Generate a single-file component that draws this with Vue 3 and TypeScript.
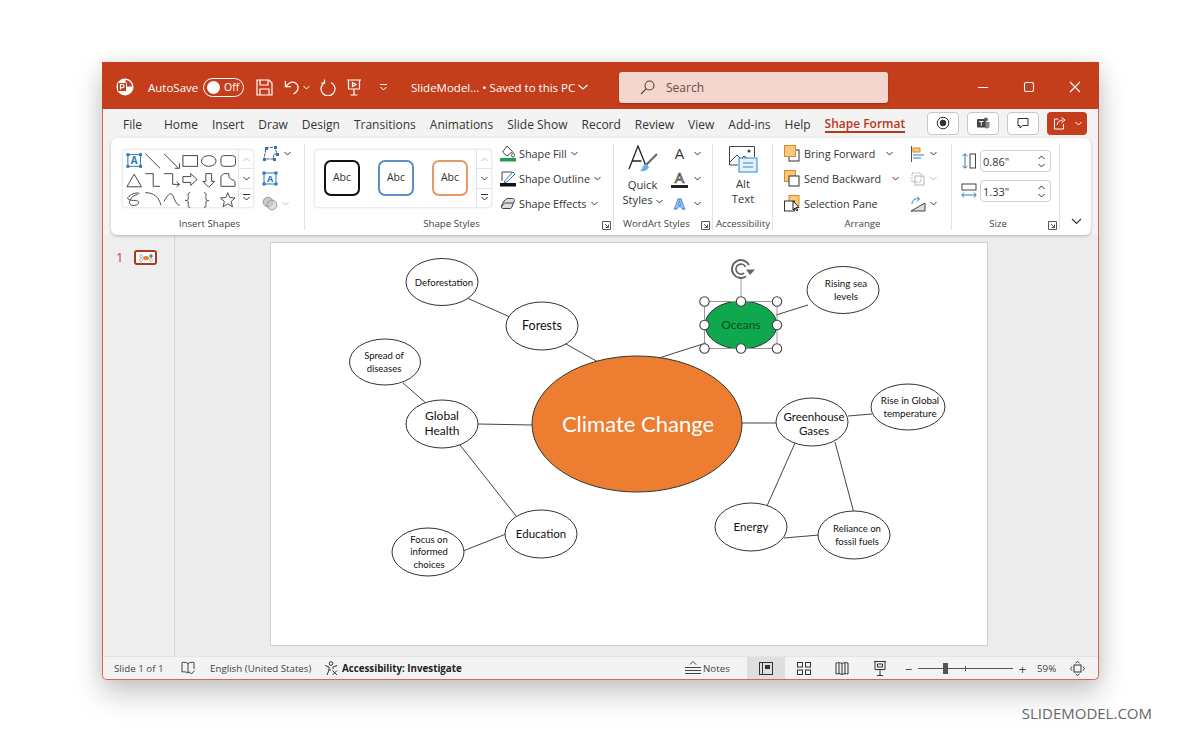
<template>
  <div class="page">
    <div class="window">
      <!-- Title bar -->
      <header class="titlebar">
        <svg class="logo" width="20" height="20" viewBox="0 0 20 20">
          <circle cx="10" cy="10" r="8.5" fill="#fff" />
          <path d="M10.500 9.500V3a6.500 6.500 0 0 1 6.500 6.500Z" fill="#c43e1c" />
          <rect x="2.500" y="5.500" width="9" height="9" rx="1" fill="#c43e1c" stroke="#fff" />
          <path d="M5.500 12.500V7.500H7.500a1.500 1.500 0 0 1 0 3.200H5.500" fill="none" stroke="#fff" stroke-width="1.200" />
        </svg>
        <span class="autosave">AutoSave</span>
        <div class="toggle"><span class="knob"></span><span>Off</span></div>
        <svg class="qat save" width="17" height="17" viewBox="0 0 17 17" fill="none" stroke="#fff" stroke-width="1.200">
          <path d="M1 1h12l3 3v12H1Z" /><path d="M4 1v5h8V1M4 16v-6h9v6" />
        </svg>
        <svg class="qat undo" width="15" height="17" viewBox="0 0 16 17" fill="none" stroke="#fff" stroke-width="1.300">
          <path d="M1.500 1.500v6h6" /><path d="M1.500 7.500 6 3.600c4-2.400 9 .6 9 4.800 0 3-1.600 5.200-5 7.100" />
        </svg>
        <svg class="chev-white" width="7" height="5" viewBox="0 0 7 5" fill="none" stroke="#fff"><path d="m.5 1 3 3 3-3" /></svg>
        <svg class="qat redo" width="16" height="17" viewBox="0 0 16 17" fill="none" stroke="#fff" stroke-width="1.200">
          <path d="M5 3.500a7 7 0 1 0 6 0" /><path d="M4.500.5v3.500H1" />
        </svg>
        <svg class="qat present" width="16" height="17" viewBox="0 0 16 17" fill="none" stroke="#fff" stroke-width="1.200">
          <path d="M1 1h14M2.500 1v9h11V1M8 10v6M4.500 16h7" /><path d="m6.500 3.500 3.500 2-3.500 2Z" />
        </svg>
        <svg class="qat more" width="9" height="7" viewBox="0 0 9 7" fill="none" stroke="#fff"><path d="M1 .5h7M1.500 3l3 3 3-3" /></svg>
        <span class="doc-title">SlideModel... • Saved to this PC</span>
        <svg class="doc-chev" width="10" height="6" viewBox="0 0 10 6" fill="none" stroke="#fff" stroke-width="1.100"><path d="m.5 1 4.500 4 4.500-4" /></svg>
        <div class="search">
          <svg width="15" height="15" viewBox="0 0 15 15" fill="none" stroke="#5f3a30" stroke-width="1.100">
            <circle cx="9.500" cy="5.500" r="4.500" /><path d="M6.300 8.700 1 14" />
          </svg>
          <span>Search</span>
        </div>
        <div class="win-controls">
          <svg width="12" height="12" viewBox="0 0 12 12" stroke="#fff" fill="none"><path d="M1 6.500h10" /></svg>
          <svg width="12" height="12" viewBox="0 0 12 12" stroke="#fff" stroke-width="1.100" fill="none"><rect x="1.500" y="1.500" width="9" height="9" rx="1.500" /></svg>
          <svg width="12" height="12" viewBox="0 0 12 12" stroke="#fff" stroke-width="1.100" fill="none"><path d="m1 1 10 10M11 1 1 11" /></svg>
        </div>
      </header>

      <!-- Tabs -->
      <nav class="tabs">
        <span
          v-for="tab in tabs"
          :key="tab"
          :class="['tab', { 'tab--active': tab === 'Shape Format', 'tab--file': tab === 'File' }]"
        >{{ tab }}</span>
        <div class="tab-actions">
          <button class="tab-btn">
            <svg width="14" height="14" viewBox="0 0 14 14"><circle cx="7" cy="7" r="5.800" fill="none" stroke="#333" /><circle cx="7" cy="7" r="3.200" fill="#333" /></svg>
          </button>
          <button class="tab-btn">
            <svg width="14" height="14" viewBox="0 0 14 14"><circle cx="10" cy="3.500" r="2" fill="#666" /><path d="M8 6h5.500v4a2.500 2.500 0 0 1-5 0Z" fill="#888" /><rect x="1" y="3" width="8.500" height="8.500" rx="1" fill="#444" /><path d="M3 5.500h4.500M5.250 5.500v4.200" stroke="#fff" /></svg>
          </button>
          <button class="tab-btn">
            <svg width="14" height="14" viewBox="0 0 14 14" fill="none" stroke="#333"><path d="M2 2.500h10v7H6.500L4 12V9.500H2Z" /></svg>
          </button>
          <button class="share-btn">
            <svg width="14" height="14" viewBox="0 0 14 14" fill="none" stroke="#fff"><path d="M5.500 3H1.500v10h9V8" /><path d="M4 9c.5-3 2.500-5 6-5M8.500 1.500 12 4 8.500 7" /></svg>
            <svg width="7" height="5" viewBox="0 0 7 5" fill="none" stroke="#fff"><path d="m.5 1 3 3 3-3" /></svg>
          </button>
        </div>
      </nav>

      <!-- Ribbon -->
      <section class="ribbon">
        <div class="group group--shapes">
          <div class="group-body">
            <div class="gallery gallery--shapes">
              <svg width="118" height="59" viewBox="0 0 118 59" fill="none" stroke="#444" stroke-width="1">
                <rect x="5" y="4" width="13" height="12" stroke="#2b78b8" />
                <g fill="#2b78b8" stroke="none">
                  <rect x="3.500" y="2.500" width="3" height="3" /><rect x="16.500" y="2.500" width="3" height="3" />
                  <rect x="3.500" y="14.500" width="3" height="3" /><rect x="16.500" y="14.500" width="3" height="3" />
                  <text x="11.500" y="14" font-size="10" font-weight="700" text-anchor="middle" font-family="Open Sans, sans-serif">A</text>
                </g>
                <path d="m23 3 15 15M42 3l15 15M58 18h-5M58 18v-5" />
                <rect x="61.500" y="5" width="15" height="11" />
                <ellipse cx="88" cy="10.500" rx="7.500" ry="5.500" />
                <rect x="100.500" y="5" width="15" height="11" rx="3" />
                <path d="M11.500 24 4 37h15Z" />
                <path d="M23 23.500h8v13h7M42 23.500h9v11h7M58 34.500l-3-2.500M58 34.500l-3 2.500" />
                <path d="M61.500 26.500h8v-3l6.500 6-6.500 6v-3h-8Z" />
                <path d="M85 23.500h6v8h3l-6 6-6-6h3Z" />
                <path d="M100.500 36.500v-9c0-2 2-4 4-4h4c0 4 1 5 3 6 2 .5 3.500 1 3.500 4v3Z" />
                <path d="M17 44c-3-2-10 1-12 4-1 3 5 3 9 3 4 1 2 5-2 5-5 1-6-3-5-5 1-3 5-6 8-6" />
                <path d="M23 43c9 0 14 5 16 13" />
                <path d="M42 52c3-5 5-8 7-8 3 0 4 11 9 12" />
                <path d="M69 43c-3 0-2 2-2 5s-1 3-3 3c2 0 3 0 3 3s-1 4 2 4" />
                <path d="M83 43c3 0 2 2 2 5s1 3 3 3c-2 0-3 0-3 3s1 4-2 4" />
                <path d="m107.500 43 2 5 5.500.5-4 3.500 1.300 5.500-4.800-3-4.800 3 1.300-5.500-4-3.500 5.500-.5Z" />
              </svg>
              <div class="scroll-col">
                <span class="scroll-btn scroll-btn--off">
                  <svg width="7" height="5" viewBox="0 0 7 5" fill="none" stroke="#bbb"><path d="m.5 4 3-3 3 3" /></svg>
                </span>
                <span class="scroll-btn">
                  <svg width="7" height="5" viewBox="0 0 7 5" fill="none" stroke="#333"><path d="m.5 1 3 3 3-3" /></svg>
                </span>
                <span class="scroll-btn scroll-btn--more">
                  <svg width="9" height="7" viewBox="0 0 9 7" fill="none" stroke="#333"><path d="M1 .5h7M1.500 3l3 3 3-3" /></svg>
                </span>
              </div>
            </div>
            <div class="shape-tools">
              <div class="tool-row">
                <svg width="18" height="15" viewBox="0 0 18 15" fill="none" stroke="#555" stroke-dasharray="3 1"><path d="m4 2 9-1 2 7-3 0-1 5H2Z" /><g fill="#2b78b8" stroke="none"><rect x="3" y="1" width="3" height="3" /><rect x="12" y="0" width="3" height="3" /><rect x="14" y="7" width="3" height="3" /><rect x="1" y="12" width="3" height="3" /><rect x="11" y="12" width="3" height="3" /></g></svg>
                <svg class="chev" width="7" height="5" viewBox="0 0 7 5"><path d="m.5 1 3 3 3-3" /></svg>
              </div>
              <div class="tool-row">
                <svg width="16" height="15" viewBox="0 0 16 15" fill="none" stroke="#2b78b8"><rect x="2" y="2" width="12" height="11" /><g fill="#2b78b8" stroke="none"><rect x=".5" y=".5" width="3" height="3" /><rect x="12.500" y=".5" width="3" height="3" /><rect x=".5" y="11.500" width="3" height="3" /><rect x="12.500" y="11.500" width="3" height="3" /><text x="8" y="11" font-size="9" font-weight="700" text-anchor="middle" font-family="Open Sans, sans-serif">A</text></g></svg>
              </div>
              <div class="tool-row tool-row--off">
                <svg width="16" height="15" viewBox="0 0 16 15" fill="#c9c9c9" stroke="#999"><circle cx="6" cy="6" r="4.800" /><circle cx="10" cy="9" r="4.800" fill-opacity=".6" /></svg>
                <svg class="chev chev--off" width="7" height="5" viewBox="0 0 7 5"><path d="m.5 1 3 3 3-3" /></svg>
              </div>
            </div>
          </div>
          <span class="group-label group-label--insert">Insert Shapes</span>
        </div>

        <div class="group group--styles">
          <div class="group-body">
            <div class="gallery gallery--styles">
              <div class="abc-row">
                <span v-for="style in abcStyles" :key="style" :class="['abc', `abc--${style}`]">Abc</span>
              </div>
              <div class="scroll-col">
                <span class="scroll-btn scroll-btn--off">
                  <svg width="7" height="5" viewBox="0 0 7 5" fill="none" stroke="#bbb"><path d="m.5 4 3-3 3 3" /></svg>
                </span>
                <span class="scroll-btn">
                  <svg width="7" height="5" viewBox="0 0 7 5" fill="none" stroke="#333"><path d="m.5 1 3 3 3-3" /></svg>
                </span>
                <span class="scroll-btn scroll-btn--more">
                  <svg width="9" height="7" viewBox="0 0 9 7" fill="none" stroke="#333"><path d="M1 .5h7M1.500 3l3 3 3-3" /></svg>
                </span>
              </div>
            </div>
            <div class="style-cmds">
              <div class="cmd">
                <svg width="16" height="17" viewBox="0 0 16 17" fill="none" stroke="#444"><path d="m7 1 5.500 5.500L7 11 2.500 7Z" /><path d="M13 7.500s1.500 2 1.500 3a1.500 1.500 0 0 1-3 0c0-1 1.500-3 1.500-3Z" /><rect x="0" y="13" width="16" height="3.500" fill="#1fa04a" stroke="none" /></svg>
                <span>Shape Fill</span>
                <svg class="chev" width="7" height="5" viewBox="0 0 7 5"><path d="m.5 1 3 3 3-3" /></svg>
              </div>
              <div class="cmd">
                <svg width="16" height="17" viewBox="0 0 16 17" fill="none" stroke="#444"><path d="M2 11V2h10" /><path d="M5 10.500 13 2l2 2-8 8-3 .5Z" stroke="#2b78b8" /><rect x="0" y="13" width="16" height="3.500" fill="#111" stroke="none" /></svg>
                <span>Shape Outline</span>
                <svg class="chev" width="7" height="5" viewBox="0 0 7 5"><path d="m.5 1 3 3 3-3" /></svg>
              </div>
              <div class="cmd">
                <svg width="16" height="17" viewBox="0 0 16 17" fill="#ddd" stroke="#444"><path d="M7 3.500h5.500a2 2 0 0 1 1.800 2.700l-2.500 6a2 2 0 0 1-1.800 1.300H3a1.800 1.800 0 0 1-1.600-2.500L4 6Z" /><path d="M2 11.500c.5-2 2-3.500 3.500-3.500h8" fill="none" /></svg>
                <span>Shape Effects</span>
                <svg class="chev" width="7" height="5" viewBox="0 0 7 5"><path d="m.5 1 3 3 3-3" /></svg>
              </div>
            </div>
          </div>
          <span class="group-label group-label--shift">Shape Styles</span>
          <svg class="launcher" width="9" height="9" viewBox="0 0 9 9" fill="none" stroke="#555"><path d="M.5 8.500v-8h8v8Z" /><path d="M3 3l3.500 3.500M6.500 3.500v3h-3" /></svg>
        </div>

        <div class="group group--wordart">
          <div class="group-body">
            <div class="quick">
              <svg class="quick-icon" width="30" height="30" viewBox="0 0 30 30" fill="none">
                <path d="M1 24 10 1l8 20M4.500 16h9" stroke="#222" stroke-width="1.300" />
                <path d="M29 9 17 21" stroke="#666" stroke-width="2.200" />
                <path d="M12 26c2-1 2-4 4-6 2-1 4 0 5 2-1 3-5 5-9 4Z" fill="#6db0e6" />
              </svg>
              <span class="quick-text">Quick</span>
              <span class="quick-text">Styles <svg class="chev" width="7" height="5" viewBox="0 0 7 5"><path d="m.5 1 3 3 3-3" /></svg></span>
            </div>
            <div class="wa-col">
              <div class="wa-row"><span class="wa wa--plain">A</span><svg class="chev" width="7" height="5" viewBox="0 0 7 5"><path d="m.5 1 3 3 3-3" /></svg></div>
              <div class="wa-row"><span class="wa wa--outline">A</span><svg class="chev" width="7" height="5" viewBox="0 0 7 5"><path d="m.5 1 3 3 3-3" /></svg></div>
              <div class="wa-row"><span class="wa wa--blue">A</span><svg class="chev" width="7" height="5" viewBox="0 0 7 5"><path d="m.5 1 3 3 3-3" /></svg></div>
            </div>
          </div>
          <span class="group-label group-label--wa">WordArt Styles</span>
          <svg class="launcher" width="9" height="9" viewBox="0 0 9 9" fill="none" stroke="#555"><path d="M.5 8.500v-8h8v8Z" /><path d="M3 3l3.500 3.500M6.500 3.500v3h-3" /></svg>
        </div>

        <div class="group group--alt">
          <div class="group-body group-body--center">
            <svg class="alt-icon" width="30" height="28" viewBox="0 0 30 28" fill="none">
              <path d="M10 20H1.500V1.500h25V12" stroke="#444" />
              <path d="m2 17 7-7 4 4 3-3 4 3" stroke="#444" />
              <circle cx="21" cy="6" r="1.500" fill="#444" />
              <rect x="11" y="13" width="18" height="14" fill="#e3f1fb" stroke="#2b88d0" />
              <path d="M15 18h10M15 22h10" stroke="#2b88d0" />
            </svg>
            <span class="quick-text">Alt</span>
            <span class="quick-text">Text</span>
          </div>
          <span class="group-label">Accessibility</span>
        </div>

        <div class="group group--arrange">
          <div class="group-body">
            <div class="arrange-cmds">
              <div class="cmd cmd--arrange">
                <svg width="16" height="17" viewBox="0 0 16 17"><rect x="5" y="5" width="10" height="11" fill="#fff" stroke="#333" /><rect x=".5" y=".5" width="11" height="11" fill="#f8c77a" stroke="#d98c2e" /></svg>
                <span>Bring Forward</span>
                <svg class="chev chev--bf" width="7" height="5" viewBox="0 0 7 5"><path d="m.5 1 3 3 3-3" /></svg>
              </div>
              <div class="cmd cmd--arrange">
                <svg width="16" height="17" viewBox="0 0 16 17"><rect x=".5" y=".5" width="11" height="11" fill="#f8c77a" stroke="#d98c2e" /><rect x="5" y="6" width="10" height="10" fill="#fff" stroke="#333" /></svg>
                <span>Send Backward</span>
                <svg class="chev chev--sb" width="7" height="5" viewBox="0 0 7 5"><path d="m.5 1 3 3 3-3" /></svg>
              </div>
              <div class="cmd cmd--arrange">
                <svg width="16" height="17" viewBox="0 0 16 17"><rect x="5" y="0.500" width="10" height="10" fill="#f8c77a" stroke="#d98c2e" /><rect x=".5" y="6" width="10" height="10" fill="#fff" stroke="#333" /><path d="M9 6v9l2-2 2 3 1-1-2-2.500h3Z" fill="#fff" stroke="#222" /></svg>
                <span>Selection Pane</span>
              </div>
            </div>
            <div class="align-col">
              <div class="wa-row">
                <svg width="16" height="16" viewBox="0 0 16 16" fill="none" stroke="#555"><path d="M1.500 0v16" /><rect x="3" y="2" width="7" height="4" fill="#f8c77a" stroke="#d98c2e" /><path d="M3 9h11M3 12h8" stroke="#2b78b8" /></svg>
                <svg class="chev" width="7" height="5" viewBox="0 0 7 5"><path d="m.5 1 3 3 3-3" /></svg>
              </div>
              <div class="wa-row wa-row--off">
                <svg width="16" height="16" viewBox="0 0 16 16" fill="none" stroke="#b5b5b5"><rect x="2" y="2" width="9" height="9" stroke-dasharray="2 1" /><rect x="5" y="5" width="9" height="9" /></svg>
                <svg class="chev chev--off" width="7" height="5" viewBox="0 0 7 5"><path d="m.5 1 3 3 3-3" /></svg>
              </div>
              <div class="wa-row">
                <svg width="16" height="16" viewBox="0 0 16 16" fill="none" stroke="#444"><path d="M1 15 15 7v8Z" fill="#ddd" /><path d="M2 8c0-4 3-6 7-5M7 .5 9.500 3 7 5.500" stroke="#2b78b8" /></svg>
                <svg class="chev" width="7" height="5" viewBox="0 0 7 5"><path d="m.5 1 3 3 3-3" /></svg>
              </div>
            </div>
          </div>
          <span class="group-label group-label--arrange">Arrange</span>
        </div>

        <div class="group group--size">
          <div class="group-body group-body--size">
            <div v-for="field in sizeFields" :key="field.value" class="size-row">
              <svg v-if="field.kind === 'height'" width="16" height="16" viewBox="0 0 16 16" fill="none" stroke="#2b78b8"><path d="M4 1v14M1.500 3 4 .8 6.500 3M1.500 13 4 15.200 6.500 13" /><rect x="9" y="1" width="5.500" height="14" stroke="#444" /></svg>
              <svg v-else width="16" height="16" viewBox="0 0 16 16" fill="none" stroke="#2b78b8"><rect x="1" y="1" width="14" height="6" stroke="#444" /><path d="M1 12h14M3 9.500.8 12 3 14.500M13 9.500l2.200 2.500-2.200 2.500" /></svg>
              <div class="size-input">
                <span>{{ field.value }}</span>
                <span class="spin">
                  <svg width="7" height="5" viewBox="0 0 7 5" fill="none" stroke="#333"><path d="m.5 4 3-3 3 3" /></svg>
                  <svg width="7" height="5" viewBox="0 0 7 5" fill="none" stroke="#333"><path d="m.5 1 3 3 3-3" /></svg>
                </span>
              </div>
            </div>
          </div>
          <span class="group-label group-label--shift">Size</span>
          <svg class="launcher" width="9" height="9" viewBox="0 0 9 9" fill="none" stroke="#555"><path d="M.5 8.500v-8h8v8Z" /><path d="M3 3l3.500 3.500M6.500 3.500v3h-3" /></svg>
        </div>

        <div class="collapse">
          <svg width="11" height="7" viewBox="0 0 11 7" fill="none" stroke="#333" stroke-width="1.100"><path d="m1 1 4.500 4.500L10 1" /></svg>
        </div>
      </section>

      <!-- Workspace -->
      <main class="workspace">
        <aside class="thumbs">
          <span class="thumb-num">1</span>
          <div class="thumb">
            <svg width="16" height="8" viewBox="0 0 16 8" fill="none" stroke="#888" stroke-width=".6">
              <ellipse cx="8" cy="4" rx="3" ry="2" fill="#ed7d31" stroke="none" />
              <circle cx="3" cy="2" r="1.500" /><circle cx="3" cy="6" r="1.500" /><circle cx="13" cy="2" r="1.500" fill="#00b050" /><circle cx="13" cy="6" r="1.500" />
            </svg>
          </div>
        </aside>
        <div class="editor">
          <div class="slide">
            <svg class="diagram" width="716" height="402" viewBox="271 243 716 402">
              <g stroke="#444" stroke-width="1" fill="none">
                <line v-for="(l, i) in lines" :key="i" :x1="l[0]" :y1="l[1]" :x2="l[2]" :y2="l[3]" />
              </g>
              <g v-for="node in nodes" :key="node.id">
                <ellipse
                  :cx="node.x"
                  :cy="node.y"
                  :rx="node.rx"
                  :ry="node.ry"
                  :fill="node.fill ?? '#fff'"
                  stroke="#333"
                  stroke-width="1"
                />
                <text
                  :x="node.x + (node.dx ?? 0)"
                  :y="node.y + (node.dy ?? 0) - ((node.label.length - 1) * node.lh) / 2 + node.size * 0.34"
                  :font-size="node.size"
                  :fill="node.color ?? '#111'"
                  class="node-text"
                >
                  <tspan
                    v-for="(part, i) in node.label"
                    :key="i"
                    :x="node.x + (node.dx ?? 0)"
                    :dy="i === 0 ? 0 : node.lh"
                  >{{ part }}</tspan>
                </text>
              </g>
              <!-- selection handles -->
              <rect x="704.500" y="301.500" width="72.500" height="47" fill="none" stroke="#999" />
              <line x1="741" y1="279" x2="741" y2="301" stroke="#999" />
              <circle
                v-for="(h, i) in handles"
                :key="i"
                :cx="h[0]"
                :cy="h[1]"
                r="4.700"
                fill="#fff"
                stroke="#444"
                stroke-width="1.100"
              />
              <g fill="none" stroke="#666">
                <path d="M749 265A9 9 0 1 0 746 276.500" stroke-width="2" />
                <path d="M745.500 267A5 5 0 1 0 744 273" stroke-width="1.700" />
                <path d="M746 269.500h9l-5 5.500Z" fill="#666" stroke="none" />
              </g>
            </svg>
          </div>
        </div>
      </main>

      <!-- Status bar -->
      <footer class="status">
        <span class="st-slide">Slide 1 of 1</span>
        <svg class="st-book" width="14" height="14" viewBox="0 0 14 14" fill="none" stroke="#444"><path d="M7 2.500C5.500 1.500 3 1 1 1.500v9.500c2-.5 4.500 0 6 1 1-.7 1.500-1 2-1M7 2.500C8.500 1.500 11 1 13 1.500V8M7 2.500V12" /><path d="m8.500 11 2 2 3-3.500" /></svg>
        <span class="st-lang">English (United States)</span>
        <svg class="st-acc" width="14" height="15" viewBox="0 0 14 15" fill="none" stroke="#333"><circle cx="7" cy="2.500" r="1.800" /><path d="M1 4.500 5 6v3l-2 5M13 4.500 9 6v2M5 9h2" /><path d="m8.500 9.500 4.500 4.500M13 9.500 8.500 14" /></svg>
        <span class="st-acc-text">Accessibility: Investigate</span>
        <svg class="st-notes" width="16" height="14" viewBox="0 0 16 14" fill="none" stroke="#444"><path d="m5 3.500 3-3 3 3M0 6.500h16M0 9.500h16M0 12.500h16" /></svg>
        <span class="st-notes-text">Notes</span>
        <div class="view view--active">
          <svg width="14" height="13" viewBox="0 0 14 13" fill="none" stroke="#333"><rect x=".5" y=".5" width="13" height="12" /><path d="M3.500.5v12" /><rect x="6" y="3" width="5" height="4" fill="#333" stroke="none" /></svg>
        </div>
        <div class="view">
          <svg width="14" height="13" viewBox="0 0 14 13" fill="none" stroke="#333"><rect x=".5" y=".5" width="5" height="4.500" /><rect x="8.500" y=".5" width="5" height="4.500" /><rect x=".5" y="8" width="5" height="4.500" /><rect x="8.500" y="8" width="5" height="4.500" /></svg>
        </div>
        <div class="view">
          <svg width="14" height="13" viewBox="0 0 14 13" fill="none" stroke="#333"><path d="M7 1.500C5.500.5 3 .5 1 1v11c2-.5 4.500-.5 6 .5 1.500-1 4-1 6-.5V1c-2-.5-4.500-.5-6 .5ZM7 1.500v11M4 1v11M10 1v11" /></svg>
        </div>
        <div class="view">
          <svg width="14" height="15" viewBox="0 0 14 15" fill="none" stroke="#333"><path d="M1 .5h12M2 .5v8h10v-8M7 8.500v6M4 14.500h6M4.500 3h5v3h-5Z" /></svg>
        </div>
        <span class="zoom-sign">−</span>
        <div class="slider"><span class="tick"></span><span class="thumb-handle"></span></div>
        <span class="zoom-sign">+</span>
        <span class="zoom-value">59%</span>
        <svg class="st-fit" width="15" height="15" viewBox="0 0 15 15" fill="none" stroke="#333"><rect x="4" y="4" width="7" height="7" /><path d="m5.500 2 2-1.500 2 1.500M5.500 13l2 1.500 2-1.500M2 5.500.5 7.500l1.500 2M13 5.500l1.500 2-1.500 2" /></svg>
      </footer>
    </div>
    <div class="watermark">SLIDEMODEL.COM</div>
  </div>
</template>

<script setup lang="ts">
interface DiagramNode {
  id: string
  x: number
  y: number
  rx: number
  ry: number
  label: string[]
  size: number
  lh: number
  fill?: string
  color?: string
  dx?: number
  dy?: number
}

const tabs = [
  'File', 'Home', 'Insert', 'Draw', 'Design', 'Transitions', 'Animations',
  'Slide Show', 'Record', 'Review', 'View', 'Add-ins', 'Help', 'Shape Format'
]

const abcStyles = ['black', 'blue', 'orange']

const sizeFields = [
  { kind: 'height', value: '0.86"' },
  { kind: 'width', value: '1.33"' }
]

const nodes: DiagramNode[] = [
  { id: 'deforestation', x: 442, y: 282, rx: 36, ry: 23.5, label: ['Deforestation'], size: 9.6, lh: 12, dx: 2, dy: 1 },
  { id: 'forests', x: 542, y: 326, rx: 36, ry: 24, label: ['Forests'], size: 12.5, lh: 15 },
  { id: 'rising', x: 843, y: 290, rx: 36, ry: 23.5, label: ['Rising sea', 'levels'], size: 9.8, lh: 13, dx: 3 },
  { id: 'climate', x: 637, y: 424, rx: 105, ry: 68, label: ['Climate Change'], size: 22, lh: 24, fill: '#ed7d31', color: '#fff', dx: 1, dy: 1 },
  { id: 'oceans', x: 741, y: 325, rx: 36, ry: 24, label: ['Oceans'], size: 12, lh: 15, fill: '#0fa84e', color: '#0a4a24' },
  { id: 'spread', x: 385, y: 362, rx: 35.5, ry: 23, label: ['Spread of', 'diseases'], size: 9.5, lh: 13, dx: -1 },
  { id: 'health', x: 442, y: 424, rx: 36, ry: 24, label: ['Global', 'Health'], size: 12, lh: 15, dy: -1 },
  { id: 'greenhouse', x: 812, y: 422, rx: 36, ry: 24, label: ['Greenhouse', 'Gases'], size: 11.5, lh: 14.5, dx: 2, dy: 2 },
  { id: 'rise', x: 908, y: 407, rx: 37, ry: 23, label: ['Rise in Global', 'temperature'], size: 9.8, lh: 13, dx: 2 },
  { id: 'education', x: 541, y: 534, rx: 36, ry: 24, label: ['Education'], size: 11.5, lh: 15 },
  { id: 'focus', x: 428, y: 552, rx: 36, ry: 24, label: ['Focus on', 'informed', 'choices'], size: 9.5, lh: 12.5, dx: 1 },
  { id: 'energy', x: 751, y: 527, rx: 36, ry: 24, label: ['Energy'], size: 11.5, lh: 15 },
  { id: 'reliance', x: 854, y: 535, rx: 36, ry: 24, label: ['Reliance on', 'fossil fuels'], size: 9.5, lh: 13, dx: 3 }
]

const lines: number[][] = [
  [467, 298, 510, 317],
  [566, 344, 598, 362],
  [706, 343, 659, 358],
  [776, 315, 808, 305],
  [403, 383, 427, 404],
  [478, 424, 532, 425],
  [460, 445, 516, 516],
  [506, 534, 463, 551],
  [741, 423, 776, 423],
  [848, 416, 872, 414],
  [795, 443, 767, 506],
  [835, 442, 854, 513],
  [784, 538, 819, 535]
]

const handles: number[][] = [
  [704.5, 301.5], [741, 301.5], [777, 301.5],
  [704.5, 325], [777, 325],
  [704.5, 348.5], [741, 348.5], [777, 348.5]
]
</script>

<style>
html,
body {
  margin: 0;
  background: #fff;
}
</style>

<style scoped>
.page {
  width: 1200px;
  height: 743px;
  overflow: hidden;
  padding: 62px 0 0 102px;
  box-sizing: border-box;
  font-family: "Open Sans", sans-serif;
  color: #333;
  background: #fff;
}

.window {
  width: 997px;
  height: 618px;
  display: flex;
  flex-direction: column;
  background: #f3f3f3;
  border-radius: 2px 2px 5px 5px;
  box-shadow: 0 14px 30px rgba(0, 0, 0, 0.22), 0 0 18px rgba(0, 0, 0, 0.08);
  border: 1px solid #d8674a;
  border-top: 0;
  box-sizing: border-box;
}

/* Title bar */
.titlebar {
  height: 47px;
  flex: none;
  margin: 0 -1px;
  display: flex;
  align-items: center;
  background: #c43e1c;
  color: #fff;
  font-size: 11.5px;
  padding: 3px 0 0 13px;
  box-sizing: border-box;
}

.logo { margin-right: 13px; }
.autosave { width: 55px; }

.toggle {
  width: 41px;
  height: 19px;
  box-sizing: border-box;
  border: 1px solid #fff;
  border-radius: 10px;
  display: flex;
  align-items: center;
  gap: 4px;
  padding-left: 3px;
  font-size: 10.5px;
}

.knob {
  width: 13px;
  height: 13px;
  border-radius: 50%;
  background: #fff;
}

.qat { flex: none; }
.save { margin-left: 12px; }
.undo { margin-left: 11px; }
.chev-white { margin-left: 4px; }
.redo { margin-left: 10px; }
.present { margin-left: 10px; }
.more { margin-left: 17px; }
.doc-title { margin-left: 23px; white-space: nowrap; width: 164px; }
.doc-chev { margin-left: 3px; }

.search {
  width: 269px;
  height: 31px;
  margin-left: 31px;
  box-sizing: border-box;
  padding-left: 21px;
  display: flex;
  align-items: center;
  gap: 11px;
  background: #f5d6ce;
  border-radius: 3px;
  box-shadow: 0 1px 2px rgba(0, 0, 0, 0.25);
  color: #6b4a40;
  font-size: 12px;
}

.win-controls {
  margin-left: auto;
  display: flex;
  gap: 34px;
  padding-right: 18px;
}

/* Tabs */
.tabs {
  height: 28px;
  flex: none;
  display: flex;
  align-items: center;
  box-sizing: border-box;
  padding: 2px 0 0 20px;
  gap: 14px;
  font-size: 12px;
  color: #333;
  white-space: nowrap;
}

.tab--file { margin-right: 8px; }

.tab--active {
  color: #b7391b;
  font-weight: 600;
  border-bottom: 2px solid #b7391b;
  line-height: 15px;
  margin-top: 1px;
}

.tab-actions {
  margin-left: auto;
  display: flex;
  gap: 8px;
  padding-right: 11px;
  margin-top: -2px;
}

.tab-btn {
  width: 32px;
  height: 23px;
  padding: 0;
  display: flex;
  align-items: center;
  justify-content: center;
  background: #fff;
  border: 1px solid #c8c8c8;
  border-radius: 4px;
}

.share-btn {
  width: 40px;
  height: 23px;
  padding: 0;
  display: flex;
  align-items: center;
  justify-content: center;
  gap: 8px;
  background: #c43e1c;
  border: 0;
  border-radius: 4px;
}

/* Ribbon */
.ribbon {
  height: 97px;
  flex: none;
  margin: 1px 7px 0 8px;
  display: flex;
  background: #fff;
  border-radius: 6px;
  box-shadow: 0 1px 3px rgba(0, 0, 0, 0.25);
  position: relative;
  z-index: 1;
  font-size: 11px;
}

.group {
  position: relative;
  display: flex;
  flex-direction: column;
  flex: none;
  box-sizing: border-box;
  padding-top: 6px;
}

.group::after {
  content: "";
  position: absolute;
  right: 0;
  top: 6px;
  bottom: 5px;
  width: 1px;
  background: #e2e2e2;
}

.group--shapes { width: 194px; }
.group--styles { width: 309px; }
.group--wordart { width: 99px; }
.group--alt { width: 60px; }
.group--arrange { width: 179px; }
.group--size { width: 108px; }

.group-body {
  flex: 1;
  display: flex;
  min-height: 0;
}

.group-body--center {
  flex-direction: column;
  align-items: center;
}

.group-label {
  height: 20px;
  line-height: 18px;
  text-align: center;
  font-size: 9.7px;
  color: #444;
  white-space: nowrap;
}

.group-label--insert { padding-left: 3px; }
.group-label--shift { padding-right: 16px; }
.group-label--wa { text-align: left; padding-left: 9px; }

.launcher {
  position: absolute;
  right: 3px;
  bottom: 5px;
}

.gallery {
  display: flex;
  background: #fff;
  border: 1px solid #ececec;
  border-radius: 4px;
  box-shadow: 0 0 2px rgba(0, 0, 0, 0.12);
  box-sizing: border-box;
  height: 59px;
  margin-top: 5px;
}

.gallery--shapes { width: 132px; margin-left: 11px; }
.gallery--styles { width: 178px; margin-left: 9px; }

.scroll-col {
  margin-left: auto;
  width: 14px;
  flex: none;
  display: flex;
  flex-direction: column;
  border-left: 1px solid #e4e4e4;
}

.scroll-btn {
  flex: 1;
  display: flex;
  align-items: center;
  justify-content: center;
  border-bottom: 1px solid #e4e4e4;
}

.scroll-btn--more { border-bottom: 0; }

.shape-tools {
  margin-left: 8px;
  display: flex;
  flex-direction: column;
  gap: 6px;
}

.tool-row {
  height: 19px;
  display: flex;
  align-items: center;
  gap: 4px;
}

.chev {
  fill: none;
  stroke: #333;
  flex: none;
}

.chev--off { stroke: #bbb; }

.abc-row {
  display: flex;
  gap: 18px;
  padding: 10px 0 0 9px;
}

.abc {
  width: 36px;
  height: 36px;
  box-sizing: border-box;
  border-radius: 7px;
  display: flex;
  align-items: center;
  justify-content: center;
  font-size: 10.5px;
  padding-bottom: 3px;
  border: 2px solid #111;
}

.abc--blue { border-color: #5b8fc6; }
.abc--orange { border-color: #e59a66; }

.style-cmds,
.arrange-cmds {
  display: flex;
  flex-direction: column;
  gap: 6px;
}

.style-cmds { margin-left: 8px; }
.arrange-cmds { margin-left: 11px; width: 125px; }

.cmd {
  height: 19px;
  display: flex;
  align-items: center;
  gap: 3px;
  white-space: nowrap;
  font-size: 10.8px;
}

.cmd--arrange { gap: 4px; }
.cmd .chev { margin-left: 1px; }
.cmd .chev--bf { margin-left: 7px; }
.cmd .chev--sb { margin-left: 7px; }

.quick {
  width: 57px;
  display: flex;
  flex-direction: column;
  align-items: center;
}

.quick-icon { margin-top: 1px; }

.quick-text {
  font-size: 11.2px;
  line-height: 15px;
  white-space: nowrap;
}

.quick .quick-text:nth-of-type(1) { margin-top: 2px; }
.alt-icon { margin: 1px 0 3px; }

.wa-col {
  display: flex;
  flex-direction: column;
  gap: 6px;
}

.align-col {
  display: flex;
  flex-direction: column;
  gap: 6px;
  margin-left: 1px;
}

.wa-row {
  height: 19px;
  display: flex;
  align-items: center;
  gap: 4px;
}

.wa {
  width: 17px;
  text-align: center;
  font-size: 15px;
  line-height: 19px;
  margin-right: 2px;
}

.wa--outline {
  color: #fff;
  -webkit-text-stroke: 0.7px #333;
  border-bottom: 3px solid #222;
  line-height: 14px;
  height: 15px;
}

.wa--blue {
  font-weight: 700;
  color: #bcdcf5;
  -webkit-text-stroke: 0.8px #2b78d8;
}

.group-body--size {
  flex-direction: column;
  gap: 8px;
  padding: 6px 0 0 9px;
}

.size-row {
  display: flex;
  align-items: center;
  gap: 3px;
}

.size-input {
  width: 71px;
  height: 22px;
  box-sizing: border-box;
  border: 1px solid #cfcfcf;
  border-radius: 4px;
  display: flex;
  align-items: center;
  justify-content: space-between;
  padding: 0 5px 0 2px;
  font-size: 11px;
}

.spin {
  display: flex;
  flex-direction: column;
  gap: 3px;
}

.collapse {
  flex: 1;
  display: flex;
  align-items: flex-end;
  justify-content: center;
  padding: 0 0 10px 2px;
}

/* Workspace */
.workspace {
  flex: 1;
  min-height: 0;
  display: flex;
  background: #ececec;
}

.thumbs {
  width: 72px;
  flex: none;
  box-sizing: border-box;
  padding: 14px 0 0 13px;
  display: flex;
  align-items: flex-start;
  gap: 11px;
  border-right: 1px solid #d6d6d6;
  background: #eeeeee;
}

.thumb-num {
  font-size: 13px;
  line-height: 16px;
  color: #b7472a;
}

.thumb {
  width: 23px;
  height: 15px;
  box-sizing: border-box;
  margin-top: 1px;
  display: flex;
  align-items: center;
  justify-content: center;
  background: #fff;
  border: 2px solid #a9391f;
  border-radius: 3px;
}

.editor {
  flex: 1;
  padding: 7px 0 0 95px;
}

.slide {
  width: 718px;
  height: 404px;
  box-sizing: border-box;
  background: #fff;
  border: 1px solid #cfcfcf;
}

.diagram { display: block; }

.node-text {
  font-family: Lato, sans-serif;
  text-anchor: middle;
}

/* Status bar */
.status {
  height: 23px;
  flex: none;
  display: flex;
  align-items: center;
  font-size: 9.75px;
  color: #444;
  white-space: nowrap;
  background: #f3f3f3;
  border-top: 1px solid #e4e4e4;
  box-sizing: border-box;
  border-radius: 0 0 5px 5px;
}

.status > span { padding-top: 1px; }

.st-slide { margin-left: 11px; width: 67px; }
.st-book { margin-right: 15px; }
.st-lang { width: 114px; }
.st-acc { margin-right: 4px; }
.st-acc-text { font-weight: 700; color: #222; width: 121px; }
.st-notes { margin-left: 222px; margin-right: 2px; }
.st-notes-text { width: 44px; }

.view {
  width: 38px;
  height: 100%;
  display: flex;
  align-items: center;
  justify-content: center;
}

.view--active { background: #dedede; }

.zoom-sign {
  font-size: 13px;
  width: 9px;
  text-align: center;
  margin-left: 5px;
}

.slider {
  position: relative;
  width: 95px;
  height: 1px;
  margin-left: 5px;
  background: #555;
}

.tick {
  position: absolute;
  left: 47px;
  top: -2px;
  width: 1px;
  height: 5px;
  background: #555;
}

.thumb-handle {
  position: absolute;
  left: 25px;
  top: -5px;
  width: 5px;
  height: 11px;
  background: #555;
}

.zoom-value { margin-left: 10px; width: 24px; }
.st-fit { margin-left: 9px; }

.watermark {
  width: 1050px;
  margin-top: 23px;
  text-align: right;
  font-size: 15px;
  color: #666;
}
</style>
